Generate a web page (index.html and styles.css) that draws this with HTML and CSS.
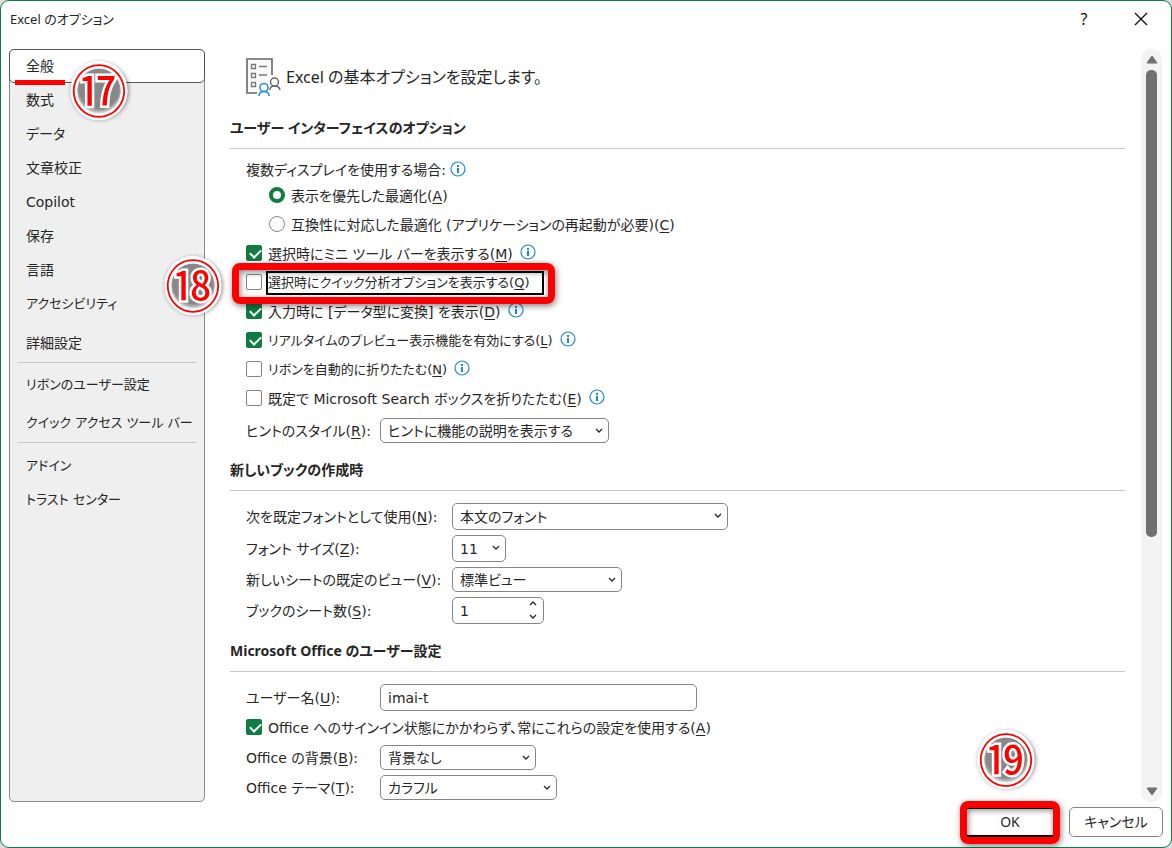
FILE: index.html
```html
<!DOCTYPE html>
<html lang="ja">
<head>
    <meta charset="UTF-8">
    <meta name="viewport" content="width=device-width, initial-scale=1.0">
    <title>Excel のオプション</title>
    <link rel="stylesheet" href="styles.css">
</head>
<body>
    <!-- Shared icons -->
    <svg class="defs" aria-hidden="true">
        <symbol id="info" viewBox="0 0 16 16">
            <circle cx="8" cy="8" r="7" fill="none" stroke="#1e88cf" stroke-width="1.2"/>
            <path d="M7 4h2v2H7zM7 7h2v5H7z" fill="#1e88cf"/>
        </symbol>
        <symbol id="chevron" viewBox="0 0 8 5">
            <path d="M1 1l3 3 3-3" fill="none" stroke="#262626" stroke-width="1.3"/>
        </symbol>
    </svg>

    <div class="dialog">
        <header class="titlebar">
            <h1>Excel のオプション</h1>
            <button class="title-btn" aria-label="ヘルプ">?</button>
            <button class="title-btn" aria-label="閉じる">
                <svg width="14" height="14" viewBox="0 0 14 14"><path d="M1 1l12 12M13 1L1 13" stroke="#111" stroke-width="1.4"/></svg>
            </button>
        </header>

        <main class="main">
            <nav class="sidebar">
                <ul>
                    <li class="selected">
                        <a href="#general">全般</a>
                        <span class="underline"></span>
                        <span class="badge badge-17">⑰</span>
                    </li>
                    <li><a href="#formulas">数式</a></li>
                    <li><a href="#data">データ</a></li>
                    <li><a href="#proofing">文章校正</a></li>
                    <li><a href="#copilot">Copilot</a></li>
                    <li><a href="#save">保存</a></li>
                    <li><a href="#language">言語</a></li>
                    <li><a href="#accessibility" class="compact">アクセシビリティ</a></li>
                </ul>
                <ul class="tall">
                    <li><a href="#advanced">詳細設定</a></li>
                </ul>
                <ul class="tall">
                    <li><a href="#ribbon" class="compact">リボンのユーザー設定</a></li>
                    <li><a href="#qat" class="compact">クイック アクセス ツール バー</a></li>
                </ul>
                <ul class="last">
                    <li><a href="#addins" class="compact">アドイン</a></li>
                    <li><a href="#trust" class="compact">トラスト センター</a></li>
                </ul>
            </nav>

            <div class="content" id="general">
                <div class="intro">
                    <svg width="35" height="38" viewBox="0 0 35 38" fill="none">
                        <path d="M26 20V1H1v34h10l4-9 5-5z" fill="#fafafa"/>
                        <path d="M26 17V1H1v34h10" stroke="#666" stroke-width="1.6"/>
                        <path d="M5.500 6.500h4v4h-4zM5.500 15.500h4v4h-4zM5.500 24.500h4v4h-4z" stroke="#777" stroke-width="1.3"/>
                        <path d="M13 8.500h8M13 17h8" stroke="#777" stroke-width="1.4"/>
                        <g stroke="#666" stroke-width="1.5">
                            <circle cx="28.500" cy="24" r="4"/>
                            <path d="M24 32c0-3 2-4 4.500-4s5 1 5.500 4"/>
                        </g>
                        <g stroke="#2b8fd8" stroke-width="1.6">
                            <circle cx="18" cy="29.500" r="4"/>
                            <path d="M13 38c0-3 2-4.500 5-4.500s5 1.500 5 4.500"/>
                        </g>
                    </svg>
                    <p>Excel の基本オプションを設定します。</p>
                </div>

                <section>
                    <h2>ユーザー インターフェイスのオプション</h2>
                    <div class="fields">
                        <div class="option-title">複数ディスプレイを使用する場合:<svg class="info"><use href="#info"/></svg></div>
                        <div class="options">
                            <div class="option indent">
                                <input type="radio" name="display" id="optA" checked>
                                <label for="optA">表示を優先した最適化(<u>A</u>)</label>
                            </div>
                            <div class="option indent">
                                <input type="radio" name="display" id="optC">
                                <label for="optC">互換性に対応した最適化 (アプリケーションの再起動が必要)(<u>C</u>)</label>
                            </div>
                            <div class="option">
                                <input type="checkbox" id="optM" checked>
                                <label for="optM">選択時にミニ ツール バーを表示する(<u>M</u>)</label>
                                <svg class="info"><use href="#info"/></svg>
                            </div>
                            <div class="option marked">
                                <input type="checkbox" id="optQ">
                                <label for="optQ" class="focused compact">選択時にクイック分析オプションを表示する(<u>Q</u>)</label>
                                <span class="frame"></span>
                                <span class="badge badge-18">⑱</span>
                            </div>
                            <div class="option">
                                <input type="checkbox" id="optD" checked>
                                <label for="optD">入力時に [データ型に変換] を表示(<u>D</u>)</label>
                                <svg class="info"><use href="#info"/></svg>
                            </div>
                            <div class="option">
                                <input type="checkbox" id="optL" checked>
                                <label for="optL" class="compact">リアルタイムのプレビュー表示機能を有効にする(<u>L</u>)</label>
                                <svg class="info"><use href="#info"/></svg>
                            </div>
                            <div class="option">
                                <input type="checkbox" id="optN">
                                <label for="optN" class="compact">リボンを自動的に折りたたむ(<u>N</u>)</label>
                                <svg class="info"><use href="#info"/></svg>
                            </div>
                            <div class="option">
                                <input type="checkbox" id="optE">
                                <label for="optE">既定で Microsoft Search ボックスを折りたたむ(<u>E</u>)</label>
                                <svg class="info"><use href="#info"/></svg>
                            </div>
                        </div>
                        <div class="field">
                            <label for="hint">ヒントのスタイル(<u>R</u>):</label>
                            <div class="select w-hint">
                                <select id="hint"><option>ヒントに機能の説明を表示する</option></select>
                                <svg><use href="#chevron"/></svg>
                            </div>
                        </div>
                    </div>
                </section>

                <section>
                    <h2>新しいブックの作成時</h2>
                    <div class="fields wide-labels">
                        <div class="field">
                            <label for="font">次を既定フォントとして使用(<u>N</u>):</label>
                            <div class="select high w-font">
                                <select id="font"><option>本文のフォント</option></select>
                                <svg><use href="#chevron"/></svg>
                            </div>
                        </div>
                        <div class="field">
                            <label for="size">フォント サイズ(<u>Z</u>):</label>
                            <div class="select high w-size">
                                <select id="size"><option>11</option></select>
                                <svg><use href="#chevron"/></svg>
                            </div>
                        </div>
                        <div class="field">
                            <label for="view">新しいシートの既定のビュー(<u>V</u>):</label>
                            <div class="select w-view">
                                <select id="view"><option>標準ビュー</option></select>
                                <svg><use href="#chevron"/></svg>
                            </div>
                        </div>
                        <div class="field">
                            <label for="sheets">ブックのシート数(<u>S</u>):</label>
                            <div class="spinner">
                                <input type="number" id="sheets" value="1">
                                <div class="spin-arrows">
                                    <svg class="up"><use href="#chevron"/></svg>
                                    <svg><use href="#chevron"/></svg>
                                </div>
                            </div>
                        </div>
                    </div>
                </section>

                <section>
                    <h2>Microsoft Office のユーザー設定</h2>
                    <div class="fields">
                        <div class="field">
                            <label for="user">ユーザー名(<u>U</u>):</label>
                            <input type="text" id="user" value="imai-t">
                        </div>
                        <div class="option short">
                            <input type="checkbox" id="signin" checked>
                            <label for="signin">Office へのサインイン状態にかかわらず、常にこれらの設定を使用する(<u>A</u>)</label>
                        </div>
                        <div class="field">
                            <label for="bg">Office の背景(<u>B</u>):</label>
                            <div class="select w-bg">
                                <select id="bg"><option>背景なし</option></select>
                                <svg><use href="#chevron"/></svg>
                            </div>
                        </div>
                        <div class="field">
                            <label for="theme">Office テーマ(<u>T</u>):</label>
                            <div class="select w-theme">
                                <select id="theme"><option>カラフル</option></select>
                                <svg><use href="#chevron"/></svg>
                            </div>
                        </div>
                    </div>
                </section>
            </div>

            <div class="scrollbar">
                <svg width="12" height="9" viewBox="0 0 12 9"><path d="M6 1l5 7H1z" fill="#707070" stroke="#707070" stroke-linejoin="round"/></svg>
                <div class="track"><div class="thumb"></div></div>
                <svg width="12" height="9" viewBox="0 0 12 9"><path d="M6 8l5-7H1z" fill="#707070" stroke="#707070" stroke-linejoin="round"/></svg>
            </div>
        </main>

        <footer class="footer">
            <div class="ok-wrap">
                <button class="btn btn-ok">OK</button>
                <span class="frame"></span>
                <span class="badge badge-19">⑲</span>
            </div>
            <button class="btn">キャンセル</button>
        </footer>
    </div>
</body>
</html>
```

FILE: styles.css
```css
* {
    box-sizing: border-box;
}

body {
    margin: 0;
    background: #dcdcdc;
    color: #262626;
    font-family: "DejaVu Sans", "Noto Sans CJK JP", sans-serif;
    font-size: 14px;
    line-height: 20px;
    font-feature-settings: "palt";
}

ul, p, h1, h2 {
    margin: 0;
    padding: 0;
}

button, input, select {
    font: inherit;
    font-feature-settings: inherit;
    color: inherit;
    margin: 0;
}

u {
    text-underline-offset: 2px;
}

.compact {
    font-size: 13px;
}

.defs {
    position: absolute;
    width: 0;
    height: 0;
}

.dialog {
    display: flex;
    flex-direction: column;
    min-height: 100vh;
    background: #fff;
    border: 1px solid #107c41;
    border-radius: 9px;
}

/* Title bar */
.titlebar {
    display: flex;
    align-items: center;
    height: 48px;
    padding: 0 7px 12px 9px;
    font-family: "Noto Sans", "Noto Sans CJK JP", sans-serif;
}

.titlebar h1 {
    flex: 1;
    font-size: 13px;
    font-weight: normal;
}

.title-btn {
    display: flex;
    align-items: center;
    justify-content: center;
    width: 46px;
    height: 32px;
    margin-left: 11px;
    padding: 0;
    border: none;
    background: none;
    color: #111;
    font-size: 16px;
}

.main {
    display: flex;
    flex: 1;
    padding: 0 9px 0 8px;
}

/* Sidebar */
.sidebar {
    width: 196px;
    background: #efefef;
    border: 1px solid #8a8a8a;
    border-radius: 5px;
}

.sidebar ul {
    list-style: none;
}

.sidebar a {
    display: flex;
    align-items: center;
    height: 34px;
    padding-left: 16px;
    color: inherit;
    text-decoration: none;
    white-space: nowrap;
}

.sidebar .selected {
    position: relative;
    margin: -1px -1px 0;
    background: #fff;
    border: 1px solid #555;
    border-radius: 5px;
}

.sidebar .selected a {
    height: 32px;
}

.sidebar .tall {
    margin: 0 8px;
    padding-top: 3px;
    border-bottom: 1px solid #c8c8c8;
}

.sidebar .tall a {
    height: 38px;
    padding-left: 8px;
}

.sidebar .last {
    padding-top: 6px;
}

/* Content */
.content {
    flex: 1;
    padding: 9px 16px 0 25px;
}

.intro {
    display: flex;
    align-items: center;
    gap: 5px;
    margin: 0 0 5px 16px;
    font-family: "Noto Sans", "Noto Sans CJK JP", sans-serif;
    font-size: 16px;
}

h2 {
    padding: 14px 0 7px;
    border-bottom: 1px solid #c8c8c8;
    font-family: "Noto Sans", "Noto Sans CJK JP", sans-serif;
    font-size: 14px;
    line-height: 26px;
}

.fields {
    display: flex;
    flex-direction: column;
    gap: 5px;
    padding: 12px 0 0 16px;
}

.option-title {
    display: flex;
    gap: 4px;
    height: 15px;
    line-height: 18px;
}

.option {
    display: flex;
    align-items: center;
    height: 29px;
}

.option.indent {
    padding-left: 23px;
}

.option.short {
    height: 24px;
}

.option label {
    margin-left: 6px;
    white-space: nowrap;
}

.option .info {
    margin: 0 0 4px 7px;
}

.info {
    width: 16px;
    height: 16px;
}

input[type="checkbox"],
input[type="radio"] {
    appearance: none;
    position: relative;
    flex: none;
    width: 16px;
    height: 16px;
    margin-bottom: 2px;
    border: 1px solid #858585;
    border-radius: 2px;
    background: #fff;
}

input[type="radio"] {
    border-radius: 50%;
}

input[type="radio"]:checked {
    border: 4px solid #107c41;
}

input[type="checkbox"]:checked {
    background: #107c41;
    border-color: #107c41;
}

input[type="checkbox"]:checked::after {
    content: "";
    position: absolute;
    left: 3px;
    top: 3px;
    width: 9px;
    height: 5px;
    border: solid #fff;
    border-width: 0 0 2px 2px;
    transform: rotate(-45deg);
}

.marked {
    position: relative;
    width: 298px;
}

.option .focused {
    width: 278px;
    margin-left: 4px;
    border: 2px solid #000;
}

/* Form fields */
.field {
    display: flex;
    align-items: center;
}

.field > label {
    width: 134px;
    white-space: nowrap;
}

.wide-labels .field > label {
    width: 206px;
}

.select {
    position: relative;
    height: 25px;
}

.select.high {
    height: 27px;
}

.select svg {
    position: absolute;
    right: 6px;
    top: 10px;
    width: 8px;
    height: 5px;
    pointer-events: none;
}

select,
input[type="text"],
input[type="number"] {
    appearance: none;
    width: 100%;
    height: 100%;
    padding: 0 7px;
    border: 1px solid #858585;
    border-radius: 5px;
    background: #fff;
}

input[type="text"] {
    width: 317px;
    height: 27px;
}

input[type="number"]::-webkit-inner-spin-button {
    display: none;
}

.select.w-hint {
    width: 229px;
}

.select.w-font {
    width: 276px;
}

.select.w-size {
    width: 54px;
}

.select.w-view {
    width: 170px;
}

.select.w-bg {
    width: 156px;
}

.select.w-theme {
    width: 177px;
}

.spinner {
    position: relative;
    width: 92px;
    height: 27px;
}

.spin-arrows {
    position: absolute;
    top: 4px;
    right: 7px;
    display: flex;
    flex-direction: column;
    gap: 8px;
}

.spin-arrows svg {
    width: 8px;
    height: 5px;
}

.spin-arrows .up {
    transform: rotate(180deg);
}

/* Scrollbar */
.scrollbar {
    display: flex;
    flex-direction: column;
    align-items: center;
    width: 21px;
    padding: 6px 0;
    background: #f3f3f3;
    border-radius: 10px;
}

.track {
    flex: 1;
    width: 11px;
    padding: 6px 0 10px;
}

.thumb {
    height: 66%;
    background: #707070;
    border-radius: 5px;
}

/* Footer */
.footer {
    display: flex;
    justify-content: flex-end;
    gap: 12px;
    padding: 5px 8px 10px;
}

.btn {
    width: 94px;
    height: 30px;
    padding: 0;
    border: 1px solid #858585;
    border-radius: 5px;
    background: #fff;
    font-family: "Noto Sans", "Noto Sans CJK JP", sans-serif;
}

.btn-ok {
    border: 2px solid #000;
}

.ok-wrap {
    position: relative;
}

/* Red callouts */
.frame {
    position: absolute;
    z-index: 1;
    inset: -5px -11px -7px -14px;
    border: 7px solid #f00;
    border-radius: 8px;
    box-shadow: 1px 2px 6px rgba(0, 0, 0, 0.5), inset 1px 2px 6px rgba(0, 0, 0, 0.5);
    pointer-events: none;
}

.ok-wrap .frame {
    inset: -6px -3px -7px;
}

.underline {
    position: absolute;
    left: 5px;
    bottom: -3px;
    width: 50px;
    height: 5px;
    background: #f00;
}

.badge {
    position: absolute;
    z-index: 2;
    width: 56px;
    height: 56px;
    border-radius: 50%;
    background: radial-gradient(circle, #888 50%, #fff 66%);
    box-shadow: 1px 2px 5px rgba(0, 0, 0, 0.6);
    color: #f00;
    font-family: "Noto Sans CJK JP", sans-serif;
    font-size: 56px;
    font-weight: normal;
    line-height: 54px;
    text-align: center;
    -webkit-text-stroke: 5px #fff;
    paint-order: stroke fill;
}

.badge-17 {
    left: 61px;
    top: 11px;
}

.badge-18 {
    left: -81px;
    top: -12px;
}

.badge-19 {
    left: 15px;
    top: -77px;
}
```
